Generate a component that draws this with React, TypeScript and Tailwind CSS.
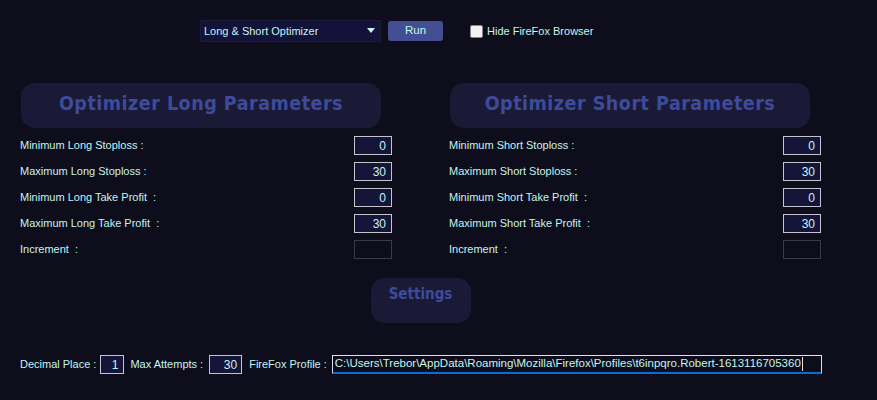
import * as React from "react";

const label = "text-[#c6f4ee] text-[11px] leading-none whitespace-pre";
const font = { fontFamily: '"Liberation Sans", Arial, sans-serif' };
const titleFont = { fontFamily: '"DejaVu Sans Condensed", "DejaVu Sans", sans-serif' };

type Row = { text: string; value: string; disabled?: boolean };

function ParamInput({ value, disabled }: { value: string; disabled?: boolean }) {
  return (
    <div
      className={
        "w-[38px] h-[19px] border flex items-center justify-end pr-[5px] text-[12px] text-[#c6f4ee] " +
        (disabled ? "border-[#3a3a4a] bg-[#0e0d1c]" : "border-[#c4c4cc] bg-[#15153a]")
      }
    >
      {value}
    </div>
  );
}

function Column({ title, rows }: { title: string; rows: Row[] }) {
  return (
    <div className="w-[372px] flex flex-col">
      <div className="ml-[1px] w-[360px] h-[45px] rounded-[14px] bg-[#1a1a36] flex items-center justify-center pb-[4px]">
        <span className="text-[#3d4b9c] text-[19.5px] font-bold tracking-[0.5px]" style={titleFont}>
          {title}
        </span>
      </div>
      <div className="mt-[8px] flex flex-col gap-[7px]">
        {rows.map((r) => (
          <div key={r.text} className="flex items-center justify-between">
            <span className={label}>{r.text}</span>
            <ParamInput value={r.value} disabled={r.disabled} />
          </div>
        ))}
      </div>
    </div>
  );
}

export default function App() {
  const longRows: Row[] = [
    { text: "Minimum Long Stoploss :", value: "0" },
    { text: "Maximum Long Stoploss :", value: "30" },
    { text: "Minimum Long Take Profit  :", value: "0" },
    { text: "Maximum Long Take Profit  :", value: "30" },
    { text: "Increment  :", value: "", disabled: true },
  ];
  const shortRows: Row[] = [
    { text: "Minimum Short Stoploss :", value: "0" },
    { text: "Maximum Short Stoploss :", value: "30" },
    { text: "Minimum Short Take Profit  :", value: "0" },
    { text: "Maximum Short Take Profit  :", value: "30" },
    { text: "Increment  :", value: "", disabled: true },
  ];

  return (
    <div className="w-[877px] h-[400px] bg-[#0e0d1c] overflow-hidden" style={font}>
      <div className="flex items-center pt-[20px] pl-[200px]">
        <div className="w-[181px] h-[22px] bg-[#12123a] border border-[#1c1c30] flex items-center justify-between pl-[3px] pr-[3px]">
          <span className="text-[#c6f4ee] text-[11px]">Long &amp; Short Optimizer</span>
          <svg width="10" height="6" viewBox="0 0 10 6" className="mr-[1px]">
            <path d="M1 0 L9 0 L5 5 Z" fill="#c6f4ee" />
          </svg>
        </div>
        <div className="ml-[7px] w-[55px] h-[20px] rounded-[3px] bg-[#434f92] flex items-center justify-center text-[#c6f4ee] text-[11.5px]">
          Run
        </div>
        <div className="ml-[27px] w-[13px] h-[13px] rounded-[2px] bg-[#f2f2f2] border border-[#888]" />
        <span className={"ml-[4px] " + label}>Hide FireFox Browser</span>
      </div>

      <div className="mt-[41px] px-[20px] w-[841px]">
        <div className="flex justify-between">
          <Column title="Optimizer Long Parameters" rows={longRows} />
          <Column title="Optimizer Short Parameters" rows={shortRows} />
        </div>
        <div className="mt-[19px] flex justify-center">
          <div className="w-[100px] h-[45px] rounded-[14px] bg-[#1a1a36] flex justify-center pt-[5px]">
            <span className="text-[#3d4b9c] text-[15px] font-bold" style={titleFont}>
              Settings
            </span>
          </div>
        </div>
      </div>

      <div className="mt-[32px] pl-[20px] w-[822px] flex items-center">
        <span className={label}>Decimal Place :</span>
        <div className="ml-[4px] w-[24px] h-[19px] border border-[#c4c4cc] bg-[#15153a] flex items-center justify-end pr-[5px] text-[12px] text-[#c6f4ee]">
          1
        </div>
        <span className={"ml-[6px] " + label}>Max Attempts :</span>
        <div className="ml-[6px] w-[33px] h-[19px] border border-[#c4c4cc] bg-[#15153a] flex items-center justify-end pr-[4px] text-[12px] text-[#c6f4ee]">
          30
        </div>
        <span className={"ml-[7px] " + label}>FireFox Profile :</span>
        <div className="ml-[5px] flex-1 h-[19px] border border-[#e0e0e8] border-b-[2px] border-b-[#0a6ad6] bg-[#0e0d1c] flex items-center pl-[2px] text-[11.5px] text-[#c6f4ee] whitespace-nowrap overflow-hidden">
          C:\Users\Trebor\AppData\Roaming\Mozilla\Firefox\Profiles\t6inpqro.Robert-1613116705360
          <span className="ml-[1px] w-[1px] h-[14px] bg-[#e0e0e8]" />
        </div>
      </div>
    </div>
  );
}
